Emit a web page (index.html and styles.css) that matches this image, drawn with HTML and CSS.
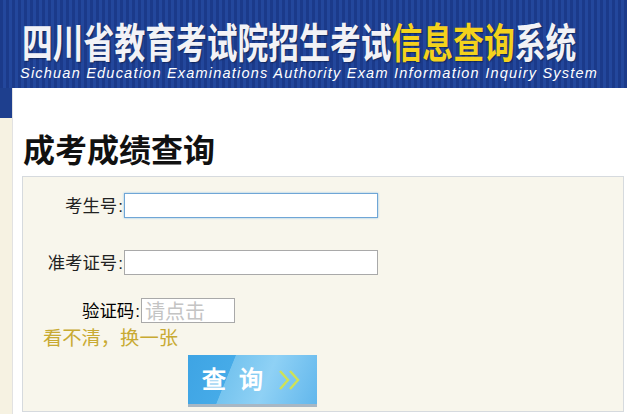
FILE: index.html
```html
<!DOCTYPE html>
<html lang="zh-CN">
<head>
<meta charset="utf-8">
<title>成考成绩查询</title>
<link rel="stylesheet" href="styles.css">
</head>
<body>
<header class="banner">
  <div class="title">四川省教育考试院招生考试<span class="hl">信息查询</span>系统</div>
  <div class="subtitle">Sichuan Education Examinations Authority Exam Information Inquiry System</div>
</header>
<main class="panel">
  <h1 class="heading">成考成绩查询</h1>
  <form class="box">
    <div class="row row-ksh">
      <label class="lbl">考生号<span class="colon">:</span></label>
      <input class="field focus" type="text">
    </div>
    <div class="row row-zkz">
      <label class="lbl">准考证号<span class="colon">:</span></label>
      <input class="field" type="text">
    </div>
    <div class="row row-yzm">
      <label class="lbl lbl-wide">验证码<span class="colon">:</span></label>
      <input class="field captcha" type="text" placeholder="请点击">
    </div>
    <div class="refresh">看不清，换一张</div>
    <div class="actions">
      <button class="btn" type="button"><span class="btn-text">查&nbsp;询</span><svg class="btn-arrow" width="24" height="22" viewBox="0 0 24 22"><polyline points="3,2 11,11 3,20" fill="none" stroke="#cfe256" stroke-width="2.4"/><polyline points="13,2 21,11 13,20" fill="none" stroke="#cfe256" stroke-width="2.4"/></svg></button>
    </div>
  </form>
</main>
</body>
</html>
```
FILE: styles.css
```css
html, body {
  margin: 0;
  padding: 0;
  height: 100%;
}
body {
  background: linear-gradient(#1e3f8e 0, #1e3f8e 118px, #f6f2e2 118px);
  font-family: "Noto Sans CJK SC", "Liberation Sans", sans-serif;
  overflow: hidden;
}
.banner {
  height: 88px;
  background: repeating-linear-gradient(90deg, #1b3a8a 0, #1b3a8a 3px, #23479c 3px, #23479c 6px);
  box-sizing: border-box;
  padding-left: 22px;
  padding-top: 19px;
}
.title {
  display: inline-block;
  font-size: 30.8px;
  line-height: 31px;
  height: 31px;
  font-weight: 700;
  color: #f2f2f6;
  transform: scaleY(1.34);
  transform-origin: left top;
  white-space: nowrap;
  text-shadow: 1px 1px 1px rgba(0,0,0,0.35);
}
.title .hl {
  color: #f4d21c;
}
.subtitle {
  margin-top: 13px;
  margin-left: -2px;
  font-family: "Liberation Sans", Arial, sans-serif;
  font-style: italic;
  font-size: 14.5px;
  line-height: 15px;
  letter-spacing: 1.22px;
  color: #ffffff;
  white-space: nowrap;
}
.panel {
  margin-left: 12px;
  background: #ffffff;
  border-left: 1px solid #e2e2e2;
  height: calc(100% - 88px);
  box-sizing: border-box;
  padding-top: 40px;
}
.heading {
  margin: 0 0 8px 10px;
  font-size: 32px;
  line-height: 40px;
  font-weight: 700;
  color: #111;
}
.box {
  margin: 0 3px 0 9px;
  height: 236px;
  box-sizing: border-box;
  border: 1px solid #d6dade;
  background: #f8f6ec;
  padding-top: 16px;
}
.row {
  display: flex;
  align-items: center;
  height: 25px;
}
.row-zkz { margin-top: 32px; }
.row-yzm { margin-top: 23px; }
.lbl {
  width: 101px;
  text-align: right;
  font-size: 17.4px;
  color: #222;
  line-height: 25px;
  white-space: nowrap;
}
.colon {
  font-family: "Liberation Sans", sans-serif;
  font-size: 17px;
  margin-left: 1px;
  padding-right: 1px;
}
.lbl-wide { width: 118px; color: #000; }
.field {
  box-sizing: border-box;
  width: 254px;
  height: 25px;
  margin: 0;
  border: 1px solid #a9a9a9;
  background: #fff;
  padding: 0 3px;
  font-family: "Noto Sans CJK SC", sans-serif;
  font-size: 16px;
  outline: none;
}
.field.focus {
  border: 1px solid #6fa6d6;
  box-shadow: 0 0 2px #8cc0ea;
}
.captcha {
  width: 94px;
  font-size: 20px;
  padding: 0 3px;
}
.captcha::placeholder {
  color: #c4c4c4;
}
.refresh {
  margin-left: 20px;
  font-size: 19.3px;
  line-height: 28px;
  height: 27px;
  color: #c8aa32;
  white-space: nowrap;
}
.actions {
  margin-top: 5px;
  padding-left: 165px;
}
.btn {
  width: 129px;
  height: 52px;
  border: 0;
  border-bottom: 3px solid #a7b7c4;
  padding: 0 0 0 14px;
  margin: 0;
  background: linear-gradient(112deg, #3ea4e4 0, #46abe8 32%, #76c4ef 32.5%, #8fd1f5 60%, #62b7ec 100%);
  display: flex;
  align-items: center;
  cursor: pointer;
}
.btn-text {
  font-size: 24px;
  font-weight: 700;
  color: #ffffff;
  letter-spacing: 3px;
  line-height: 30px;
}
.btn-arrow {
  margin-left: 11px;
  display: block;
}
```
